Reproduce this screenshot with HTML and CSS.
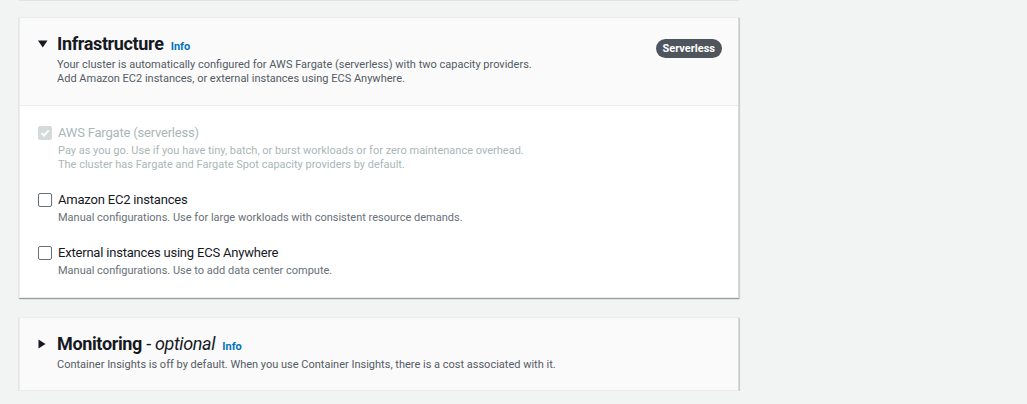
FILE: index.html
```html
<!DOCTYPE html>
<html lang="en">
<head>
<meta charset="utf-8">
<title>Create cluster</title>
<link rel="stylesheet" href="styles.css">
</head>
<body>
<div class="page">
  <div class="prev-card"></div>

  <section class="card">
    <header class="card-header">
      <span class="caret">
        <svg width="10" height="8" viewBox="0 0 10 8"><path d="M0 0.5 H9.5 L4.75 7.5 Z" fill="#16191f"/></svg>
      </span>
      <div class="header-text">
        <h2 class="title">Infrastructure <a class="info">Info</a></h2>
        <p class="desc">Your cluster is automatically configured for AWS Fargate (serverless) with two capacity providers.<br>Add Amazon EC2 instances, or external instances using ECS Anywhere.</p>
      </div>
      <span class="badge">Serverless</span>
    </header>
    <div class="card-body">
      <div class="option disabled">
        <span class="checkbox checked">
          <svg width="10" height="10" viewBox="0 0 10 10"><path d="M1.5 5.2 L4 7.6 L8.6 2.4" fill="none" stroke="#fff" stroke-width="1.8"/></svg>
        </span>
        <div class="option-text">
          <div class="option-label">AWS Fargate (serverless)</div>
          <div class="option-desc">Pay as you go. Use if you have tiny, batch, or burst workloads or for zero maintenance overhead.<br>The cluster has Fargate and Fargate Spot capacity providers by default.</div>
        </div>
      </div>
      <div class="option">
        <span class="checkbox"></span>
        <div class="option-text">
          <div class="option-label">Amazon EC2 instances</div>
          <div class="option-desc">Manual configurations. Use for large workloads with consistent resource demands.</div>
        </div>
      </div>
      <div class="option">
        <span class="checkbox"></span>
        <div class="option-text">
          <div class="option-label">External instances using ECS Anywhere</div>
          <div class="option-desc">Manual configurations. Use to add data center compute.</div>
        </div>
      </div>
    </div>
  </section>

  <section class="card collapsed">
    <header class="card-header">
      <span class="caret">
        <svg width="10" height="10" viewBox="0 0 10 10"><path d="M0.5 0.5 V9.5 L7.5 5 Z" fill="#16191f"/></svg>
      </span>
      <div class="header-text">
        <h2 class="title">Monitoring <span class="dash">-</span> <i class="optional">optional</i> <a class="info">Info</a></h2>
        <p class="desc">Container Insights is off by default. When you use Container Insights, there is a cost associated with it.</p>
      </div>
    </header>
  </section>
</div>
</body>
</html>
```

FILE: styles.css
```css
html, body {
  margin: 0;
  padding: 0;
}

body {
  background: #f2f3f3;
  font-family: Roboto, "Noto Sans", sans-serif;
  color: #16191f;
}

.page {
  padding-left: 19px;
  width: 720px;
}

.prev-card {
  height: 1px;
  background: #e2e4e4;
}

.card {
  margin-top: 16px;
  background: #fff;
  border: 1px solid #eaeded;
  border-right-color: #d5d9d9;
  box-shadow: 0 1px 1px 0 rgba(0, 28, 36, 0.3), 1px 1px 1px 0 rgba(0, 28, 36, 0.12);
}

.card.collapsed {
  margin-top: 19px;
  background: #fafafa;
}

.card-header {
  display: flex;
  align-items: flex-start;
  background: #fafafa;
  padding: 15px 16px 19px 18px;
  border-bottom: 1px solid #eaeded;
}

.collapsed .card-header {
  border-bottom: none;
  padding-bottom: 18px;
}

.caret {
  width: 19px;
  flex: none;
  display: flex;
  height: 22px;
  align-items: center;
}

.header-text {
  flex: 1;
}

.title {
  margin: 0;
  font-size: 18px;
  line-height: 22px;
  font-weight: 700;
  letter-spacing: -0.35px;
  color: #16191f;
}

.dash {
  font-weight: 400;
}

.optional {
  font-weight: 400;
}

.info {
  font-size: 11px;
  line-height: 1;
  font-weight: 700;
  letter-spacing: 0;
  color: #0073bb;
  margin-left: 3px;
}

.desc {
  margin: 3px 0 0 0;
  font-size: 11px;
  line-height: 14px;
  color: #545b64;
}

.badge {
  flex: none;
  margin-top: 6px;
  height: 19px;
  line-height: 19px;
  padding: 0 7px;
  border-radius: 10px;
  background: #4f555d;
  color: #fff;
  font-size: 11px;
  font-weight: 700;
}

.card-body {
  padding: 19px 18px 19px 18px;
  display: flex;
  flex-direction: column;
  gap: 20px;
}

.option {
  display: flex;
  align-items: flex-start;
}

.checkbox {
  flex: none;
  box-sizing: border-box;
  width: 14px;
  height: 14px;
  margin-top: 1px;
  border: 1px solid #687078;
  border-radius: 2px;
  background: #fff;
  display: flex;
  align-items: center;
  justify-content: center;
}

.checkbox.checked {
  border-color: #d5dbdb;
  background: #d5dbdb;
}

.option-text {
  margin-left: 6px;
}

.option-label {
  font-size: 13px;
  line-height: 16px;
  letter-spacing: -0.2px;
  color: #16191f;
}

.option-desc {
  margin-top: 3px;
  font-size: 11px;
  line-height: 14px;
  color: #687078;
}

.disabled .option-label,
.disabled .option-desc {
  color: #aab7b8;
}
```
